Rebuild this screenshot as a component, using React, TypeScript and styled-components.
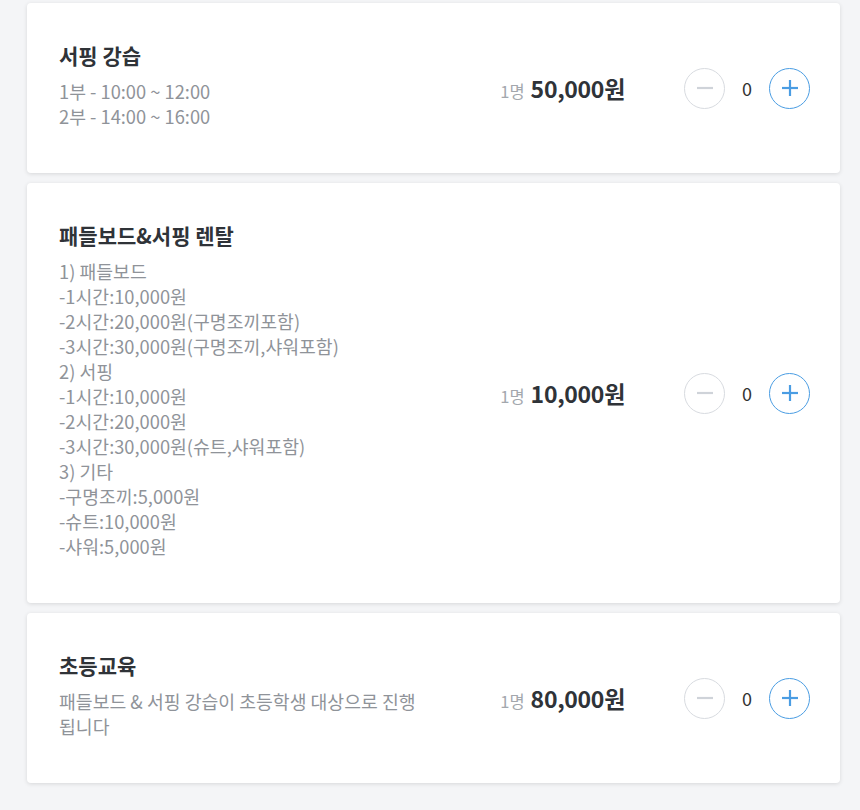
import styled, { createGlobalStyle } from 'styled-components'

const GlobalStyle = createGlobalStyle`
    html, body {
        margin: 0;
        padding: 0;
        background: #f4f5f7;
    }
    body {
        font-family: "Noto Sans CJK KR", "Noto Sans", sans-serif;
    }
`

const Page = styled.div`
    display: flex;
    flex-direction: column;
    gap: 10px;
    padding: 3px 20px 26px 27px;
    width: 813px;
`

const Card = styled.div`
    display: flex;
    align-items: center;
    background: #fff;
    border-radius: 4px;
    box-shadow: 0 1px 4px rgba(0, 0, 0, 0.12);
    padding: 0 30px 0 32px;
    box-sizing: border-box;
`

const Info = styled.div`
    width: 368px;
    padding: 38px 0 44px;
`

const Title = styled.div`
    font-size: 21px;
    font-weight: 700;
    color: #2f3338;
    line-height: 28px;
    margin-bottom: 10px;
`

const Desc = styled.div`
    font-size: 18.3px;
    color: #8f9399;
    line-height: 25px;
    white-space: pre-line;
`

const Price = styled.div`
    flex: 1;
    display: flex;
    align-items: baseline;
    justify-content: flex-end;
    gap: 6px;
    margin-right: 59px;
    color: #2f3338;
`

const Unit = styled.span`
    font-size: 16.5px;
    color: #a3a7ad;
`

const Amount = styled.span`
    font-size: 23px;
    font-weight: 700;
    letter-spacing: -0.3px;
`

const Stepper = styled.div`
    display: flex;
    align-items: center;
`

const Circle = styled.button<{ $active?: boolean }>`
    width: 41px;
    height: 41px;
    border-radius: 50%;
    border: 1px solid ${(p) => (p.$active ? '#4a9de3' : '#d8dbe0')};
    background: #fff;
    display: flex;
    align-items: center;
    justify-content: center;
    padding: 0;
    cursor: pointer;
`

const Count = styled.span`
    width: 44px;
    text-align: center;
    font-size: 18px;
    color: #333;
`

function Sign({ plus }: { plus?: boolean }) {
    const c = plus ? '#4a9de3' : '#cfd3d9'
    return (
        <svg width="18" height="18" viewBox="0 0 18 18">
            <line x1="1" y1="9" x2="17" y2="9" stroke={c} strokeWidth="2.2" />
            {plus && <line x1="9" y1="1" x2="9" y2="17" stroke={c} strokeWidth="2.2" />}
        </svg>
    )
}

const items = [
    {
        title: '서핑 강습',
        desc: '1부 - 10:00 ~ 12:00\n2부 - 14:00 ~ 16:00',
        price: '50,000원',
    },
    {
        title: '패들보드&서핑 렌탈',
        desc:
            '1) 패들보드\n-1시간:10,000원\n-2시간:20,000원(구명조끼포함)\n-3시간:30,000원(구명조끼,샤워포함)\n2) 서핑\n-1시간:10,000원\n-2시간:20,000원\n-3시간:30,000원(슈트,샤워포함)\n3) 기타\n-구명조끼:5,000원\n-슈트:10,000원\n-샤워:5,000원',
        price: '10,000원',
    },
    {
        title: '초등교육',
        desc: '패들보드 & 서핑 강습이 초등학생 대상으로 진행됩니다',
        price: '80,000원',
    },
]

export default function App() {
    return (
        <>
            <GlobalStyle />
            <Page>
                {items.map((item) => (
                    <Card key={item.title}>
                        <Info>
                            <Title>{item.title}</Title>
                            <Desc>{item.desc}</Desc>
                        </Info>
                        <Price>
                            <Unit>1명</Unit>
                            <Amount>{item.price}</Amount>
                        </Price>
                        <Stepper>
                            <Circle>
                                <Sign />
                            </Circle>
                            <Count>0</Count>
                            <Circle $active>
                                <Sign plus />
                            </Circle>
                        </Stepper>
                    </Card>
                ))}
            </Page>
        </>
    )
}
